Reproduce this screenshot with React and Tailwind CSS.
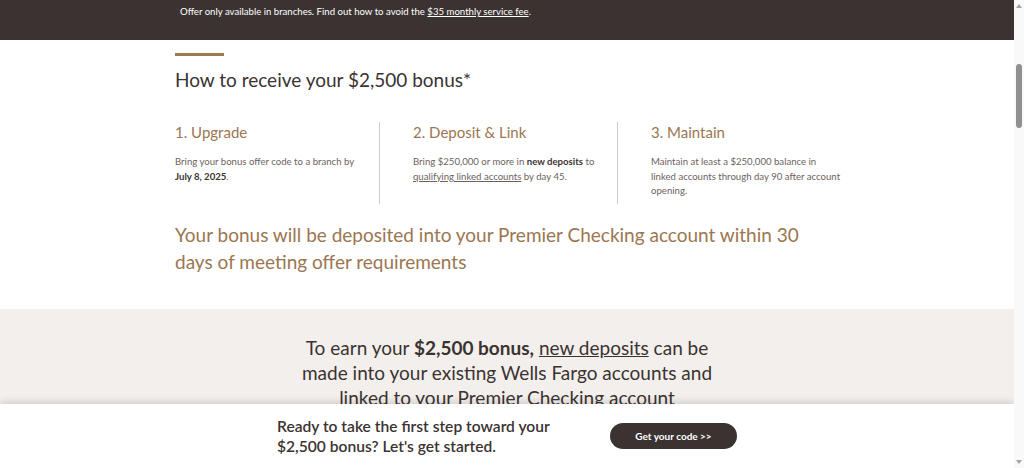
import React from 'react';

const brown = 'text-[#9c7650]';

const steps = [
  {
    title: '1. Upgrade',
    body: (
      <>
        Bring your bonus offer code to a branch by <span className="font-bold text-[#3b3331]">July 8, 2025</span>.
      </>
    ),
  },
  {
    title: '2. Deposit & Link',
    body: (
      <>
        Bring $250,000 or more in <span className="font-bold text-[#3b3331]">new deposits</span> to{' '}
        <span className="underline">qualifying linked accounts</span> by day 45.
      </>
    ),
  },
  {
    title: '3. Maintain',
    body: (
      <>
        Maintain at least a $250,000 balance in
        <br />
        linked accounts through day 90 after account opening.
      </>
    ),
  },
];

const Step = ({ title, body, last }) => (
  <div className={`w-[205px] h-[82px] ${last ? '' : 'border-r border-[#cfcac6] mr-[33px]'}`}>
    <h3 className={`text-[15px] leading-[20px] ${brown}`}>{title}</h3>
    <p className="mt-[13px] max-w-[192px] text-[9.6px] leading-[14.5px] text-[#6b6360]">{body}</p>
  </div>
);

const Scrollbar = () => (
  <div className="relative w-[10px] h-full bg-[#f9f9f9]">
    <div className="absolute left-[2px] top-[4px] w-0 h-0 border-l-[3px] border-r-[3px] border-b-[4px] border-l-transparent border-r-transparent border-b-[#a3a3a3]" />
    <div className="absolute left-[2px] top-[64px] w-[6px] h-[64px] rounded-full bg-[#8f8f8f]" />
    <div className="absolute left-[2px] bottom-[4px] w-0 h-0 border-l-[3px] border-r-[3px] border-t-[4px] border-l-transparent border-r-transparent border-t-[#a3a3a3]" />
  </div>
);

export default function App() {
  return (
    <div className="flex w-[1024px] h-[468px] overflow-hidden bg-white font-['Lato',sans-serif] text-[#3b3331]">
      <div className="relative flex-1 overflow-hidden">
        <div className="h-[40px] bg-[#3b3331] pl-[180px] pt-[5px] text-[9.6px] leading-[14px] text-white">
          Offer only available in branches. Find out how to avoid the{' '}
          <span className="underline">$35 monthly service fee</span>.
        </div>

        <section className="pl-[175px] pb-[34px]">
          <div className="mt-[13px] h-[3px] w-[49px] bg-[#a07a4f]" />
          <h2 className="mt-[10px] text-[19px] leading-[28px] text-[#3b3331]">
            How to receive your $2,500 bonus*
          </h2>
          <div className="mt-[28px] flex">
            {steps.map((s, i) => (
              <Step key={s.title} {...s} last={i === steps.length - 1} />
            ))}
          </div>
          <p className={`mt-[17px] max-w-[660px] text-[19px] leading-[27px] ${brown}`}>
            Your bonus will be deposited into your Premier Checking account within 30 days of meeting offer requirements
          </p>
        </section>

        <section className="bg-[#f3efec] pt-[26px] h-[200px]">
          <p className="mx-auto max-w-[430px] text-center text-[19px] leading-[25px] text-[#3b3331]">
            To earn your <span className="font-bold">$2,500 bonus,</span>{' '}
            <span className="underline">new deposits</span> can be made into your existing Wells Fargo accounts and
            linked to your Premier Checking account
          </p>
        </section>

        <div className="absolute bottom-0 left-0 right-0 h-[64px] bg-white shadow-[0_-3px_6px_rgba(0,0,0,0.12)] flex items-center pl-[277px]">
          <p className="w-[333px] text-[15.6px] leading-[20px] font-semibold text-[#3b3331]">
            Ready to take the first step toward your
            <br />
            $2,500 bonus? Let's get started.
          </p>
          <button className="w-[127px] h-[26px] rounded-full bg-[#3b3331] text-[10px] font-bold text-white">
            Get your code &gt;&gt;
          </button>
        </div>
      </div>
      <Scrollbar />
    </div>
  );
}
